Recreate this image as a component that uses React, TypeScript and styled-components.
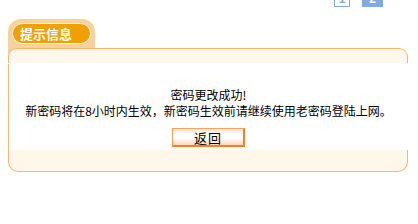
import React from "react";
import styled, { createGlobalStyle } from "styled-components";

const GlobalStyle = createGlobalStyle`
  body {
    margin: 0;
    background: #ffffff;
    font-family: "Noto Sans CJK SC", "Liberation Sans", sans-serif;
    font-size: 12px;
    color: #000;
  }
`;

const Page = styled.div`
  width: 418px;
  height: 224px;
  overflow: hidden;
`;

const PagerBar = styled.div`
  height: 7px;
  overflow: hidden;
  display: flex;
  align-items: flex-end;
  gap: 12px;
  padding-left: 334px;
`;

const PageBox = styled.div<{ $active?: boolean }>`
  box-sizing: border-box;
  width: ${(p) => (p.$active ? "21px" : "16px")};
  height: 16px;
  margin-top: -9px;
  border: 1px solid #7faae6;
  background: ${(p) => (p.$active ? "#7faae6" : "#ffffff")};
  color: ${(p) => (p.$active ? "#ffffff" : "#7faae6")};
  font-family: "Liberation Sans", sans-serif;
  font-weight: bold;
  font-size: 12px;
  line-height: 14px;
  text-align: center;
`;

const Panel = styled.div`
  width: 400px;
  margin: 12px 0 0 8px;
`;

const Tab = styled.div`
  box-sizing: border-box;
  width: 87px;
  height: 29px;
  padding: 4px 4px 0 4px;
  background: #f6d29e;
  border-radius: 13px 13px 0 0;
`;

const TabPill = styled.div`
  box-sizing: border-box;
  width: 79px;
  height: 21px;
  padding-left: 7px;
  border: 1px solid #fff6e4;
  border-radius: 11px;
  background: #f0a000;
  color: #ffffff;
  font-weight: bold;
  font-size: 13px;
  line-height: 19px;
`;

const HeaderWrap = styled.div`
  background: linear-gradient(#f6d29e, #f6d29e) no-repeat 0 0 / 87px 6px;
`;

const Header = styled.div`
  box-sizing: border-box;
  height: 15px;
  background: #fff8ea;
  border: 1px solid #fdb56a;
  border-bottom: none;
  border-radius: 9px 9px 0 0;
`;

const Body = styled.div`
  margin-top: 1px;
  padding: 23px 0 3px 0;
  border-left: 1px solid #fdb56a;
  background: #ffffff;
  text-align: center;
  line-height: 16px;
`;

const Message = styled.div`
  white-space: nowrap;
`;

const BackButton = styled.button`
  box-sizing: border-box;
  width: 73px;
  height: 19px;
  margin: 9px 0 0 0;
  padding: 0;
  border: 1px solid #ffa062;
  border-right: 2px solid #ff7f1e;
  border-bottom: 2px solid #ff7f1e;
  background: linear-gradient(#ffe4d0 0%, #ffffff 35%, #ffffff 55%, #ffd6b8 100%);
  font-family: "Noto Sans CJK SC", sans-serif;
  font-size: 13px;
  letter-spacing: 1px;
  line-height: 15px;
  color: #000;
`;

const Footer = styled.div`
  box-sizing: border-box;
  height: 22px;
  background: #fff8ea;
  border: 1px solid #fdb56a;
  border-top: none;
  border-radius: 0 0 10px 10px;
`;

export default function App() {
  return (
    <Page>
      <GlobalStyle />
      <PagerBar>
        <PageBox>1</PageBox>
        <PageBox $active>2</PageBox>
      </PagerBar>
      <Panel>
        <Tab>
          <TabPill>提示信息</TabPill>
        </Tab>
        <HeaderWrap>
          <Header />
        </HeaderWrap>
        <Body>
          <Message>密码更改成功!</Message>
          <Message>新密码将在8小时内生效，新密码生效前请继续使用老密码登陆上网。</Message>
          <BackButton>返回</BackButton>
        </Body>
        <Footer />
      </Panel>
    </Page>
  );
}
